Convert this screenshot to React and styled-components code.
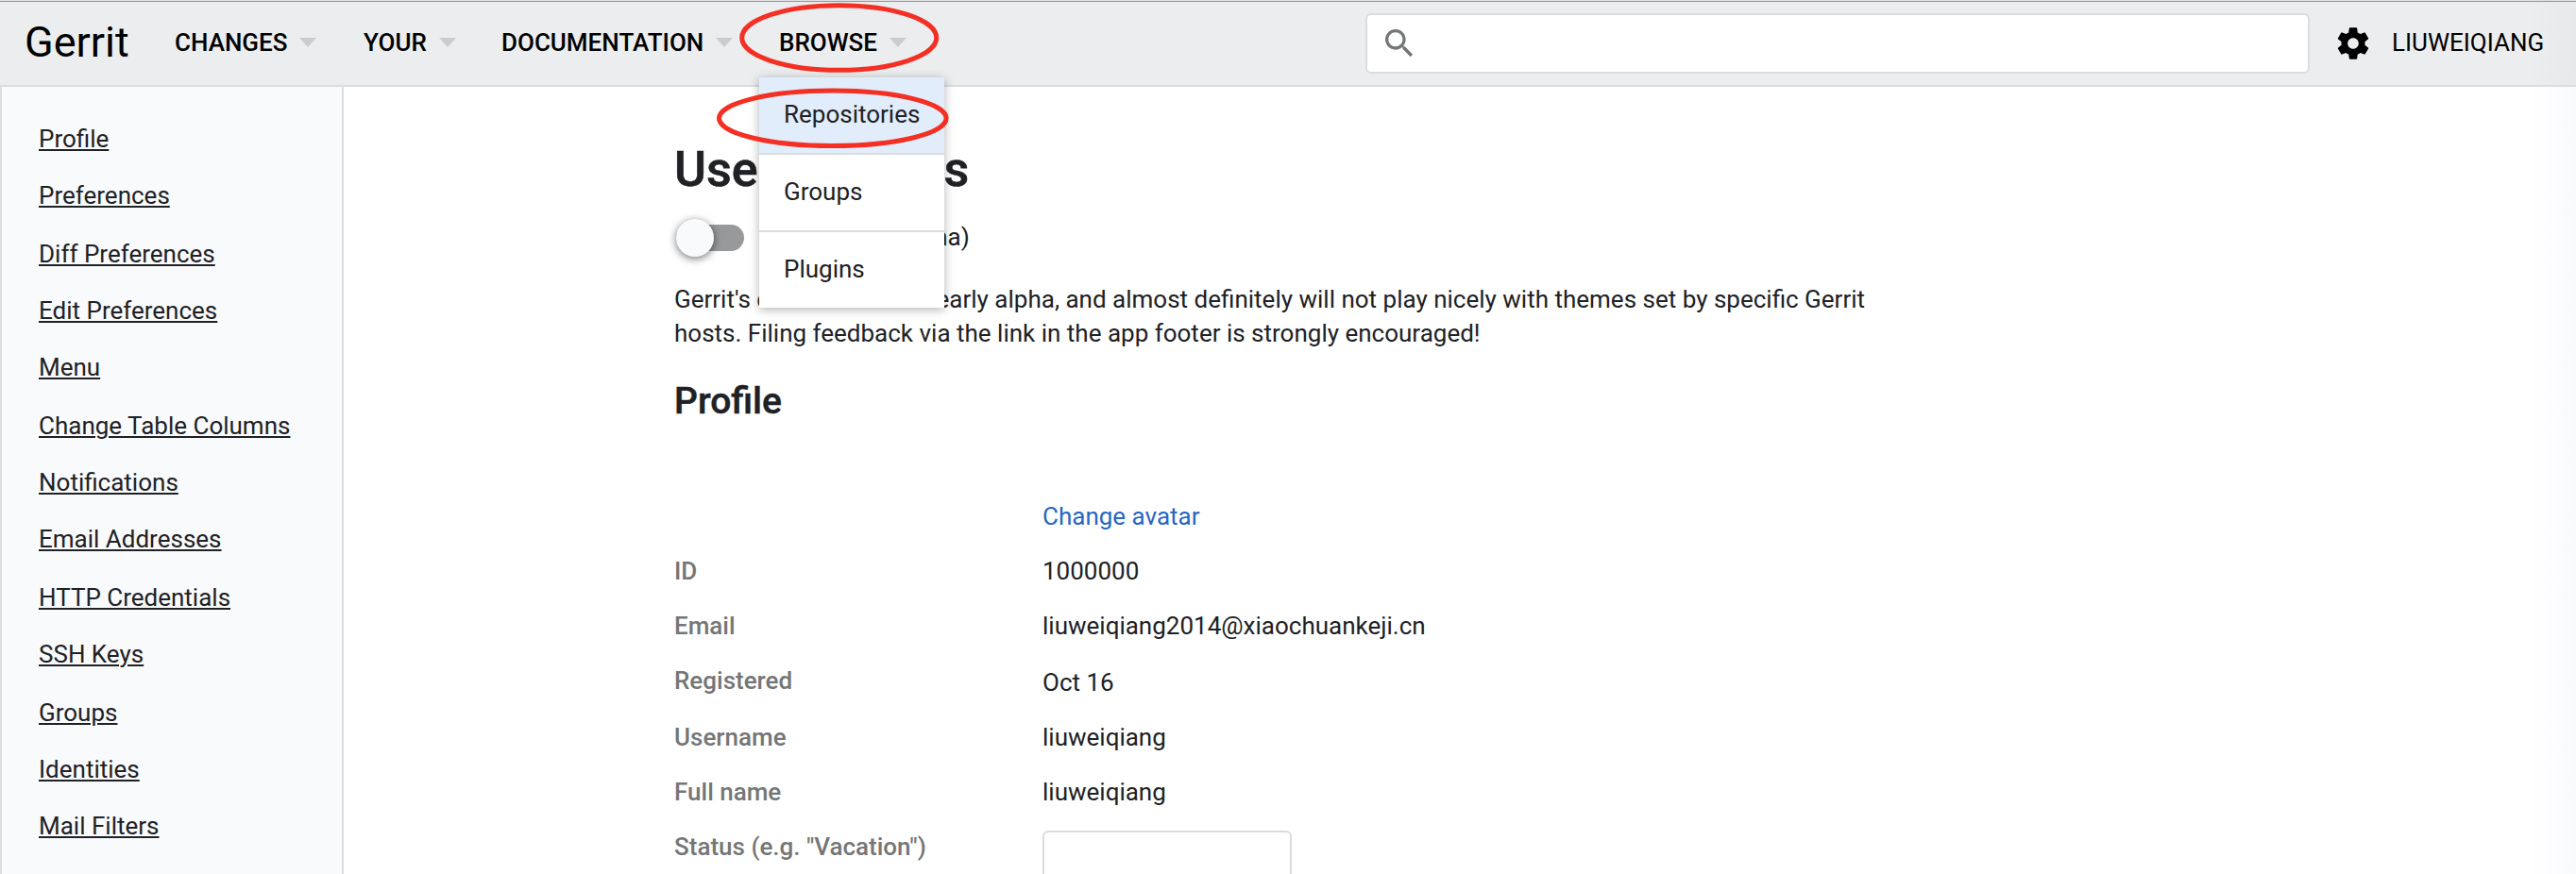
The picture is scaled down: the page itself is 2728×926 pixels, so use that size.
import React from 'react';
import styled, { createGlobalStyle } from 'styled-components';

const GlobalStyle = createGlobalStyle`
  * { box-sizing: border-box; }
  html, body { margin: 0; padding: 0; }
  body {
    width: 2728px;
    height: 926px;
    overflow: hidden;
    background: #fff;
    color: #202124;
    font: 400 26px/36px Roboto, "Liberation Sans", sans-serif;
  }
`;

const Page = styled.div`
  position: relative;
  display: flex;
  flex-direction: column;
  width: 2728px;
  height: 926px;
  overflow: hidden;
`;

const WindowEdge = styled.div`
  flex: none;
  height: 2px;
  background: #dfe0e1;
  border-bottom: 1px solid #97999a;
`;

const Header = styled.header`
  flex: none;
  display: flex;
  align-items: center;
  height: 90px;
  padding: 0 34px 0 26px;
  background: linear-gradient(to right, #ecedef 0, #ecedef 2680px, #e8e9ea 2728px);
  border-bottom: 2px solid #dbdcde;
  color: #000;
`;

const Brand = styled.a`
  width: 159px;
  font-size: 45px;
  line-height: 54px;
  margin-top: -3px;
`;

const Nav = styled.nav`
  display: flex;
  align-items: center;
  margin-top: -2px;
`;

const NavItem = styled.div`
  position: relative;
  display: flex;
  align-items: center;
  width: ${(p) => p.$width}px;
  height: 36px;
  font-weight: 500;
  white-space: nowrap;
`;

const Caret = styled.span`
  margin: 0 0 0 13px;
  border: 9px solid transparent;
  border-top: 10px solid #cbccce;
  border-bottom: 0;
`;

const Menu = styled.ul`
  position: absolute;
  z-index: 2;
  top: 55px;
  left: -21px;
  width: 196px;
  margin: 0;
  padding: 0;
  list-style: none;
  background: #fff;
  color: #202124;
  font-weight: 400;
  box-shadow: 0 2px 10px rgba(0, 0, 0, 0.3);
`;

const MenuItem = styled.li`
  height: ${(p) => (p.$last ? 80 : 82)}px;
  padding: 21px 26px 0;
  border-bottom: ${(p) => (p.$last ? 0 : 2)}px solid #dadce0;
  background: ${(p) => (p.$active ? '#e2edfc' : '#fff')};
`;

const SearchBox = styled.div`
  display: flex;
  align-items: center;
  width: 1000px;
  height: 64px;
  margin-left: auto;
  padding-left: 14px;
  background: #fff;
  border: 2px solid #dbdcde;
  border-radius: 6px;
`;

const Icon = styled.svg`
  flex: none;
  width: 40px;
  height: 40px;
  fill: ${(p) => p.$color};
`;

const Account = styled.div`
  display: flex;
  align-items: center;
  gap: 20px;
  width: 222px;
  margin-left: 26px;
`;

const AccountName = styled.span`
  margin: -2px 0 0 1px;
`;

const Body = styled.div`
  flex: 1;
  display: flex;
  min-height: 0;
  background: linear-gradient(to right, #fff 0, #fff 2680px, #f9fafc 2728px);
`;

const Sidebar = styled.aside`
  flex: none;
  width: 364px;
  padding: 37px 0 0 39px;
  background: #f9fafc;
  border: solid #dddee0;
  border-width: 0 2px;
`;

const SideRow = styled.div`
  height: ${(p) => (p.$tall ? 62 : 60)}px;
`;

const SideLink = styled.a`
  text-decoration: underline;
  text-decoration-thickness: 2px;
  text-underline-offset: 2px;
`;

const Main = styled.main`
  width: 1300px;
  margin-left: 350px;
  padding-top: 56px;
`;

const Title = styled.h1`
  margin: 0;
  font-size: 52px;
  line-height: 64px;
  font-weight: 500;
  -webkit-text-stroke: 0.6px currentColor;
`;

const ToggleRow = styled.div`
  display: flex;
  align-items: center;
  height: 36px;
  margin-top: 21px;
`;

const Track = styled.span`
  display: flex;
  align-items: center;
  width: 72px;
  height: 28px;
  margin: 2px 18px 0 2px;
  border-radius: 14px;
  background: #98999b;
`;

const Knob = styled.span`
  width: 40px;
  height: 40px;
  border-radius: 50%;
  background: #f9fafc;
  box-shadow: 0 2px 9px rgba(0, 0, 0, 0.55);
`;

const Notice = styled.p`
  margin: 30px 0 0;
`;

const Subtitle = styled.h2`
  margin: 30px 0 0;
  font-size: 39px;
  line-height: 48px;
  font-weight: 500;
  -webkit-text-stroke: 0.5px currentColor;
`;

const Fields = styled.div`
  margin-top: 80px;
`;

const Field = styled.div`
  display: flex;
  height: ${(p) => p.$height || 58}px;
`;

const Label = styled.span`
  width: 390px;
  color: #757677;
  font-weight: 500;
`;

const Value = styled.span`
  padding-top: ${(p) => p.$drop || 0}px;
`;

const AvatarLink = styled.a`
  color: #2a66c0;
`;

const StatusInput = styled.input`
  width: 264px;
  height: 64px;
  margin: 1px 0 0;
  background: #fff;
  border: 2px solid #dadce0;
  border-radius: 6px;
`;

const Marks = styled.svg`
  position: absolute;
  z-index: 3;
  top: 0;
  left: 740px;
  width: 280px;
  height: 170px;
  fill: none;
  stroke: #f42f23;
  stroke-width: 5px;
  pointer-events: none;
`;

const sideLinks = [
  ['Profile'],
  ['Preferences', true],
  ['Diff Preferences'],
  ['Edit Preferences'],
  ['Menu', true],
  ['Change Table Columns'],
  ['Notifications'],
  ['Email Addresses', true],
  ['HTTP Credentials'],
  ['SSH Keys', true],
  ['Groups'],
  ['Identities'],
  ['Mail Filters'],
];

const fields = [
  { label: 'ID', value: '1000000' },
  { label: 'Email', value: 'liuweiqiang2014@xiaochuankeji.cn' },
  { label: 'Registered', value: 'Oct 16', drop: 2, height: 60 },
  { label: 'Username', value: 'liuweiqiang' },
  { label: 'Full name', value: 'liuweiqiang' },
];

const browseItems = ['Repositories', 'Groups', 'Plugins'];

const SEARCH =
  'M15.5 14h-.79l-.28-.27C15.41 12.59 16 11.11 16 9.5 16 5.91 13.09 3 9.5 3S3 5.91 3 9.5 5.91 16 9.5 16c1.61 0 3.09-.59 4.23-1.57l.27.28v.79l5 4.99L20.49 19l-4.99-5zm-6 0C7.01 14 5 11.99 5 9.5S7.01 5 9.5 5 14 7.01 14 9.5 11.99 14 9.5 14z';
const GEAR =
  'M19.43 12.98c.04-.32.07-.64.07-.98s-.03-.66-.07-.98l2.11-1.65c.19-.15.24-.42.12-.64l-2-3.46c-.12-.22-.39-.3-.61-.22l-2.49 1c-.52-.4-1.08-.73-1.69-.98l-.38-2.65C14.46 2.18 14.25 2 14 2h-4c-.25 0-.46.18-.49.42l-.38 2.65c-.61.25-1.17.59-1.69.98l-2.49-1c-.23-.09-.49 0-.61.22l-2 3.46c-.13.22-.07.49.12.64l2.11 1.65c-.04.32-.07.65-.07.98s.03.66.07.98l-2.11 1.65c-.19.15-.24.42-.12.64l2 3.46c.12.22.39.3.61.22l2.49-1c.52.4 1.08.73 1.69.98l.38 2.65c.03.24.24.42.49.42h4c.25 0 .46-.18.49-.42l.38-2.65c.61-.25 1.17-.59 1.69-.98l2.49 1c.23.09.49 0 .61-.22l2-3.46c.12-.22.07-.49-.12-.64l-2.11-1.65zM12 15.5c-1.93 0-3.5-1.57-3.5-3.5s1.57-3.5 3.5-3.5 3.5 1.57 3.5 3.5-1.57 3.5-3.5 3.5z';

export default function App() {
  return (
    <Page>
      <GlobalStyle />
      <WindowEdge />
      <Header>
        <Brand>Gerrit</Brand>
        <Nav>
          <NavItem $width={200}>CHANGES<Caret /></NavItem>
          <NavItem $width={146}>YOUR<Caret /></NavItem>
          <NavItem $width={294}>DOCUMENTATION<Caret /></NavItem>
          <NavItem $width={140}>
            BROWSE<Caret />
            <Menu>
              {browseItems.map((item, i) => (
                <MenuItem key={item} $active={i === 0} $last={i === browseItems.length - 1}>
                  {item}
                </MenuItem>
              ))}
            </Menu>
          </NavItem>
        </Nav>
        <SearchBox>
          <Icon viewBox="0 0 24 24" $color="#757677"><path d={SEARCH} /></Icon>
        </SearchBox>
        <Account>
          <Icon viewBox="0 0 24 24" $color="#000"><path d={GEAR} /></Icon>
          <AccountName>LIUWEIQIANG</AccountName>
        </Account>
      </Header>
      <Body>
        <Sidebar>
          {sideLinks.map(([name, tall]) => (
            <SideRow key={name} $tall={tall}><SideLink>{name}</SideLink></SideRow>
          ))}
        </Sidebar>
        <Main>
          <Title>User Settings</Title>
          <ToggleRow>
            <Track><Knob /></Track>
            Dark theme (alpha)
          </ToggleRow>
          <Notice>
            Gerrit's dark theme is in early alpha, and almost definitely will not play nicely with
            themes set by specific Gerrit hosts. Filing feedback via the link in the app footer is
            strongly encouraged!
          </Notice>
          <Subtitle>Profile</Subtitle>
          <Fields>
            <Field>
              <Label />
              <AvatarLink>Change avatar</AvatarLink>
            </Field>
            {fields.map((f) => (
              <Field key={f.label} $height={f.height}>
                <Label>{f.label}</Label>
                <Value $drop={f.drop}>{f.value}</Value>
              </Field>
            ))}
            <Field>
              <Label>Status (e.g. "Vacation")</Label>
              <StatusInput />
            </Field>
          </Fields>
        </Main>
      </Body>
      <Marks viewBox="740 0 280 170">
        <ellipse cx="888.7" cy="40" rx="103" ry="34.3" />
        <ellipse cx="881.8" cy="125.3" rx="120.3" ry="29.2" />
      </Marks>
    </Page>
  );
}
